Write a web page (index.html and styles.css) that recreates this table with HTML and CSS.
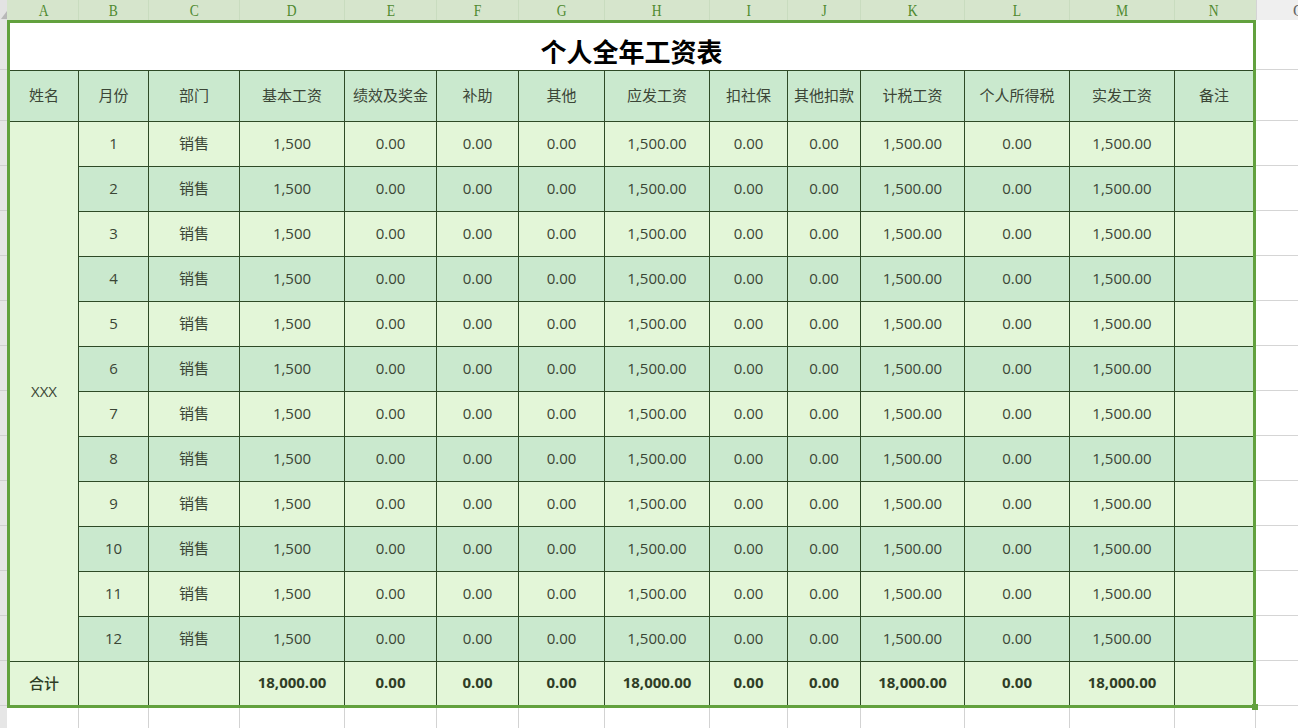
FILE: index.html
```html
<!DOCTYPE html>
<html lang="zh-CN">
<head>
<meta charset="utf-8">
<title>个人全年工资表</title>
<link rel="stylesheet" href="styles.css">
</head>
<body>
<div class="colbar">
  <div class="corner"><span class="tri"></span></div>
  <div class="colpad"></div>
  <div class="colgrid">
    <div><span>A</span></div><div><span>B</span></div><div><span>C</span></div><div><span>D</span></div><div><span>E</span></div><div><span>F</span></div><div><span>G</span></div>
    <div><span>H</span></div><div><span>I</span></div><div><span>J</span></div><div><span>K</span></div><div><span>L</span></div><div><span>M</span></div><div><span>N</span></div>
  </div>
  <div class="colpad end"></div>
  <div class="colo">O</div>
</div>
<div class="main">
  <div class="side left">
    <div class="r r-title"></div><div class="r r-head"></div>
    <div class="r"></div><div class="r"></div><div class="r"></div><div class="r"></div>
    <div class="r"></div><div class="r"></div><div class="r"></div><div class="r"></div>
    <div class="r"></div><div class="r"></div><div class="r"></div><div class="r"></div>
    <div class="r r-total"></div>
  </div>
  <div class="center">
    <div class="frame">
      <div class="sheet">
        <div class="title">个人全年工资表</div>
        <div class="row head">
          <div class="c">姓名</div><div class="c">月份</div><div class="c">部门</div><div class="c">基本工资</div>
          <div class="c">绩效及奖金</div><div class="c">补助</div><div class="c">其他</div><div class="c">应发工资</div>
          <div class="c">扣社保</div><div class="c">其他扣款</div><div class="c">计税工资</div><div class="c">个人所得税</div>
          <div class="c">实发工资</div><div class="c">备注</div>
        </div>
        <div class="name">XXX</div>
        <div class="row lt"><div class="c">1</div><div class="c">销售</div><div class="c">1,500</div><div class="c">0.00</div><div class="c">0.00</div><div class="c">0.00</div><div class="c">1,500.00</div><div class="c">0.00</div><div class="c">0.00</div><div class="c">1,500.00</div><div class="c">0.00</div><div class="c">1,500.00</div><div class="c"></div></div>
        <div class="row dk"><div class="c">2</div><div class="c">销售</div><div class="c">1,500</div><div class="c">0.00</div><div class="c">0.00</div><div class="c">0.00</div><div class="c">1,500.00</div><div class="c">0.00</div><div class="c">0.00</div><div class="c">1,500.00</div><div class="c">0.00</div><div class="c">1,500.00</div><div class="c"></div></div>
        <div class="row lt"><div class="c">3</div><div class="c">销售</div><div class="c">1,500</div><div class="c">0.00</div><div class="c">0.00</div><div class="c">0.00</div><div class="c">1,500.00</div><div class="c">0.00</div><div class="c">0.00</div><div class="c">1,500.00</div><div class="c">0.00</div><div class="c">1,500.00</div><div class="c"></div></div>
        <div class="row dk"><div class="c">4</div><div class="c">销售</div><div class="c">1,500</div><div class="c">0.00</div><div class="c">0.00</div><div class="c">0.00</div><div class="c">1,500.00</div><div class="c">0.00</div><div class="c">0.00</div><div class="c">1,500.00</div><div class="c">0.00</div><div class="c">1,500.00</div><div class="c"></div></div>
        <div class="row lt"><div class="c">5</div><div class="c">销售</div><div class="c">1,500</div><div class="c">0.00</div><div class="c">0.00</div><div class="c">0.00</div><div class="c">1,500.00</div><div class="c">0.00</div><div class="c">0.00</div><div class="c">1,500.00</div><div class="c">0.00</div><div class="c">1,500.00</div><div class="c"></div></div>
        <div class="row dk"><div class="c">6</div><div class="c">销售</div><div class="c">1,500</div><div class="c">0.00</div><div class="c">0.00</div><div class="c">0.00</div><div class="c">1,500.00</div><div class="c">0.00</div><div class="c">0.00</div><div class="c">1,500.00</div><div class="c">0.00</div><div class="c">1,500.00</div><div class="c"></div></div>
        <div class="row lt"><div class="c">7</div><div class="c">销售</div><div class="c">1,500</div><div class="c">0.00</div><div class="c">0.00</div><div class="c">0.00</div><div class="c">1,500.00</div><div class="c">0.00</div><div class="c">0.00</div><div class="c">1,500.00</div><div class="c">0.00</div><div class="c">1,500.00</div><div class="c"></div></div>
        <div class="row dk"><div class="c">8</div><div class="c">销售</div><div class="c">1,500</div><div class="c">0.00</div><div class="c">0.00</div><div class="c">0.00</div><div class="c">1,500.00</div><div class="c">0.00</div><div class="c">0.00</div><div class="c">1,500.00</div><div class="c">0.00</div><div class="c">1,500.00</div><div class="c"></div></div>
        <div class="row lt"><div class="c">9</div><div class="c">销售</div><div class="c">1,500</div><div class="c">0.00</div><div class="c">0.00</div><div class="c">0.00</div><div class="c">1,500.00</div><div class="c">0.00</div><div class="c">0.00</div><div class="c">1,500.00</div><div class="c">0.00</div><div class="c">1,500.00</div><div class="c"></div></div>
        <div class="row dk"><div class="c">10</div><div class="c">销售</div><div class="c">1,500</div><div class="c">0.00</div><div class="c">0.00</div><div class="c">0.00</div><div class="c">1,500.00</div><div class="c">0.00</div><div class="c">0.00</div><div class="c">1,500.00</div><div class="c">0.00</div><div class="c">1,500.00</div><div class="c"></div></div>
        <div class="row lt"><div class="c">11</div><div class="c">销售</div><div class="c">1,500</div><div class="c">0.00</div><div class="c">0.00</div><div class="c">0.00</div><div class="c">1,500.00</div><div class="c">0.00</div><div class="c">0.00</div><div class="c">1,500.00</div><div class="c">0.00</div><div class="c">1,500.00</div><div class="c"></div></div>
        <div class="row dk"><div class="c">12</div><div class="c">销售</div><div class="c">1,500</div><div class="c">0.00</div><div class="c">0.00</div><div class="c">0.00</div><div class="c">1,500.00</div><div class="c">0.00</div><div class="c">0.00</div><div class="c">1,500.00</div><div class="c">0.00</div><div class="c">1,500.00</div><div class="c"></div></div>
        <div class="row lt total"><div class="c">合计</div><div class="c"></div><div class="c"></div><div class="c">18,000.00</div><div class="c">0.00</div><div class="c">0.00</div><div class="c">0.00</div><div class="c">18,000.00</div><div class="c">0.00</div><div class="c">0.00</div><div class="c">18,000.00</div><div class="c">0.00</div><div class="c">18,000.00</div><div class="c"></div></div>
      </div>
      <span class="handle"></span>
    </div>
    <div class="below">
      <div class="bpad"></div>
      <div class="bgrid">
        <div></div><div></div><div></div><div></div><div></div><div></div><div></div>
        <div></div><div></div><div></div><div></div><div></div><div></div><div></div>
      </div>
      <div class="bend"></div>
    </div>
  </div>
  <div class="side right">
    <div class="r r-title"></div><div class="r r-head"></div>
    <div class="r"></div><div class="r"></div><div class="r"></div><div class="r"></div>
    <div class="r"></div><div class="r"></div><div class="r"></div><div class="r"></div>
    <div class="r"></div><div class="r"></div><div class="r"></div><div class="r"></div>
    <div class="r r-total"></div>
  </div>
</div>
</body>
</html>
```
FILE: styles.css
```css
* { box-sizing: border-box; }
html, body { margin: 0; padding: 0; }
body {
  width: 1298px;
  height: 728px;
  overflow: hidden;
  background: #ffffff;
  font-family: "Open Sans", "Noto Sans CJK SC", sans-serif;
}

/* column letter bar */
.colbar {
  display: flex;
  height: 20px;
}
.corner {
  width: 7px;
  background: #e3e3e3;
  position: relative;
}
.tri {
  position: absolute;
  right: 0;
  bottom: 1px;
  width: 0;
  height: 0;
  border-left: 6px solid transparent;
  border-bottom: 8px solid #b8b8b8;
}
.colpad {
  width: 3px;
  background: #d6e5cc;
}
.colgrid {
  display: grid;
  grid-template-columns: 68px 69px 90px 104px 91px 81px 85px 104px 77px 72px 103px 104px 104px 78px;
  column-gap: 1px;
  background: #c9dcbf;
  width: 1243px;
}
.colgrid > div {
  background: #d6e5cc;
  color: #4f8a30;
  font-family: "Liberation Serif", "DejaVu Serif", serif;
  font-size: 16px;
  line-height: 22px;
  text-align: center;
}
.colgrid span {
  display: inline-block;
  transform: scaleX(0.85);
}
.colo {
  flex: 1;
  background: #efefef;
  border-left: 1px solid #d4d4d4;
  color: #666;
  font-family: "Liberation Serif", "DejaVu Serif", serif;
  font-size: 16px;
  line-height: 22px;
  padding-left: 36px;
  overflow: hidden;
  white-space: nowrap;
}

/* main area */
.main {
  display: flex;
}
.side {
  display: flex;
  flex-direction: column;
}
.side.left {
  width: 7px;
  background: #e6e6e6;
}
.side.right {
  flex: 1;
  background: #ffffff;
}
.side .r {
  height: 45px;
  border-bottom: 1px solid #d5d5d5;
}
.side .r-title { height: 50px; }
.side .r-head { height: 51px; }
.side .r-total { height: 45px; }
.side.left .r { border-bottom-color: #d0d0d0; }

.center {
  width: 1249px;
  display: flex;
  flex-direction: column;
}
.frame {
  border: 3px solid #62a13e;
  position: relative;
}
.handle {
  position: absolute;
  right: -5px;
  bottom: -5px;
  width: 6px;
  height: 6px;
  background: #62a13e;
}
.sheet {
  display: grid;
  grid-template-columns: 68px 69px 90px 104px 91px 81px 85px 104px 77px 72px 103px 104px 104px 78px;
  grid-template-rows: 47px 50px repeat(12, 44px) 43px;
  gap: 1px;
  background: #2e4a26;
}
.row { display: contents; }
.title {
  grid-column: 1 / -1;
  background: #ffffff;
  color: #000000;
  font-family: "Noto Sans CJK SC", sans-serif;
  font-weight: 700;
  font-size: 26px;
  display: flex;
  align-items: center;
  justify-content: center;
  padding-top: 7px;
}
.c {
  display: flex;
  align-items: center;
  justify-content: center;
  font-size: 15px;
  color: #3a4535;
  white-space: nowrap;
  padding-bottom: 3px;
}
.head .c {
  background: #cae9ce;
  font-family: "Noto Sans CJK SC", sans-serif;
  color: #3b4536;
  padding-bottom: 3px;
}
.lt .c { background: #e3f6d8; }
.dk .c { background: #cae9ce; }
.name {
  grid-column: 1;
  grid-row: 3 / 15;
  background: #e3f6d8;
  display: flex;
  align-items: center;
  justify-content: center;
  font-size: 15px;
  color: #3a4535;
  padding-bottom: 2px;
}
.total .c {
  font-weight: 700;
  color: #2f3d26;
}
.total .c:first-child {
  font-family: "Noto Sans CJK SC", sans-serif;
  font-weight: 500;
}

/* cells below the table */
.below {
  display: flex;
  height: 20px;
}
.bpad { width: 3px; }
.bgrid {
  display: grid;
  grid-template-columns: 68px 69px 90px 104px 91px 81px 85px 104px 77px 72px 103px 104px 104px 78px;
  column-gap: 1px;
  background: #d3d3d3;
  width: 1243px;
}
.bgrid > div { background: #ffffff; }
.bend {
  flex: 1;
  border-left: 1px solid #d3d3d3;
  margin-left: 2px;
}
```
